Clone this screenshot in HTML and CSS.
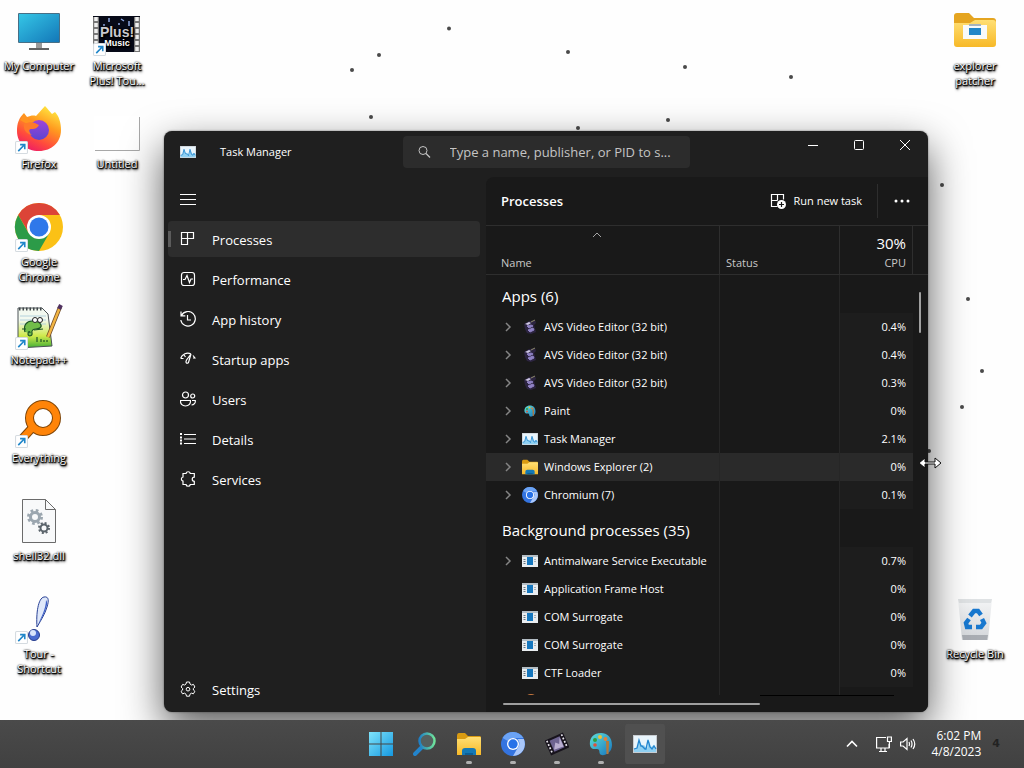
FILE: index.html
```html
<!DOCTYPE html>
<html lang="en">
<head>
<meta charset="utf-8">
<title>Desktop</title>
<link rel="stylesheet" href="styles.css">
</head>
<body>
<svg class="defs" aria-hidden="true">
  <defs>
    <linearGradient id="gScreen" x1="0" y1="0" x2="1" y2="1"><stop offset="0" stop-color="#35c6e6"/><stop offset="1" stop-color="#1377b8"/></linearGradient>
    <linearGradient id="gFox" x1=".8" y1="0" x2=".3" y2="1"><stop offset="0" stop-color="#fff044"/><stop offset=".4" stop-color="#ff9a1f"/><stop offset=".75" stop-color="#ff4a3d"/><stop offset="1" stop-color="#ee1c66"/></linearGradient>
    <linearGradient id="gFoxIn" x1="0" y1="0" x2="0" y2="1"><stop offset="0" stop-color="#a044d8"/><stop offset="1" stop-color="#5b45d0"/></linearGradient>
    <linearGradient id="gWin" x1="0" y1="0" x2="1" y2="1"><stop offset="0" stop-color="#7fe4fb"/><stop offset="1" stop-color="#1598e0"/></linearGradient>
    <linearGradient id="gFolder" x1="0" y1="0" x2="0" y2="1"><stop offset="0" stop-color="#ffdf74"/><stop offset="1" stop-color="#f7b928"/></linearGradient>
    <linearGradient id="gPage" x1="0" y1="0" x2="0" y2="1"><stop offset=".3" stop-color="#f3f9f0"/><stop offset=".7" stop-color="#cfe94a"/><stop offset="1" stop-color="#3fae35"/></linearGradient>
    <linearGradient id="gRing" x1="0" y1="0" x2="1" y2="0"><stop offset="0" stop-color="#1f7fc4"/><stop offset="1" stop-color="#6fe39b"/></linearGradient>
    <linearGradient id="gBin" x1="0" y1="0" x2="0" y2="1"><stop offset="0" stop-color="#f4f5f6"/><stop offset="1" stop-color="#d3d6da"/></linearGradient>
    <linearGradient id="gPaint" x1="0" y1="0" x2="1" y2="1"><stop offset="0" stop-color="#5fe0d8"/><stop offset="1" stop-color="#1676c0"/></linearGradient>
    <symbol id="arrow" viewBox="0 0 12 12"><rect x=".5" y=".5" width="11" height="11" rx="1" fill="#fff" stroke="#d5dbe0"/><path d="M3 9.300 8.500 3.700M4.700 3.300H9V7.600" fill="none" stroke="#1f86c9" stroke-width="1.500"/></symbol>
    <symbol id="taskmgr" viewBox="0 0 24 18"><rect width="24" height="18" fill="#c8cdd2"/><rect x="1" y="1" width="22" height="16" fill="#e9f5fc"/><path d="M1 14l3-1 2-7 2 5 3-1 3 4 2-8 2 6 3-2 2 3v4H1z" fill="#8fd0f2"/><path d="M1 14l3-1 2-8 2 6 1 0 3 3 1 0 2-9 2 7 2 2 2-3 2 3" fill="none" stroke="#2386cf" stroke-width="1.300"/></symbol>
    <symbol id="folder" viewBox="0 0 24 22"><path d="M0 3q0-3 2-3h6l3 3h12q1 0 1 2v4H0z" fill="#d99b12"/><path d="M0 6h8l3-2h12q1 0 1 1v17H0z" fill="url(#gFolder)"/><path d="M5 22v-4q0-3 3-3h8q3 0 3 3v4z" fill="#1579b5"/><path d="M8 22v-2h8v2z" fill="#0c5f96"/></symbol>
    <symbol id="chromium" viewBox="0 0 24 24"><circle cx="12" cy="12" r="12" fill="#3474e0"/><path d="M1.600 6A12 12 0 0 1 22.400 6H12a6 6 0 0 0-5.200 3z" fill="#6ba3f5"/><path d="M22.800 7A12 12 0 0 1 12 24l5.200-9a6 6 0 0 0-.8-8z" fill="#a9c7fa"/><circle cx="12" cy="12" r="6" fill="#fff"/><circle cx="12" cy="12" r="4.700" fill="#2872e8"/></symbol>
    <symbol id="film" viewBox="0 0 24 24"><g transform="rotate(-24 12 12)"><rect x="2" y="4" width="20" height="16" fill="#17131c"/><rect x="6.500" y="6" width="11" height="12" fill="#6d6390"/><path d="M7 16l4-6 3 3 3-6v10z" fill="#b9aed0"/><path d="M4 5v14M20 5v14" stroke="#e9e6ee" stroke-width="1.700" stroke-dasharray="1.800 1.800"/></g></symbol>
    <symbol id="palette" viewBox="0 0 24 24"><path d="M12 1C4 1 0 7 1 13c1 5 5 4 7 4 3 0 2 3 3 5 2 3 12 0 12-9C23 5 18 1 12 1z" fill="url(#gPaint)"/><circle cx="6" cy="8" r="2" fill="#2f9e3b"/><circle cx="11" cy="5" r="2" fill="#f1c232"/><circle cx="6" cy="13" r="1.800" fill="#e0503a"/><circle cx="16.500" cy="7" r="2" fill="#e3813a"/><path d="M17 9h3l-.5 13h-2z" fill="#b5793b"/></symbol>
    <symbol id="exe" viewBox="0 0 16 12"><rect width="16" height="12" fill="#e9edf0"/><rect width="16" height="2" fill="#b3bdc4"/><rect x="5" y="2" width="6" height="8" fill="#1677be"/><path d="M1.500 4.500h2M1.500 6.500h2M1.500 8.500h2M12.500 4.500h1M12.500 6.500h1" stroke="#6b7780"/></symbol>
    <symbol id="avs" viewBox="0 0 16 16"><path d="M2 5l5-3 6-1 1 3-2 2 2 7-5 2-4-1-2-4z" fill="#2c2440"/><path d="M9 3l4-2" stroke="#8d8a68"/><path d="M3 5l4-2 2 1-3 2z" fill="#cfc8e6"/><path d="M5 7l4-1 2 1-4 2zM6 11l5-2 1 2-4 2z" fill="#8f82c4" stroke="#8f82c4"/></symbol>
    <symbol id="chev" viewBox="0 0 8 10"><path d="M2 1l4 4-4 4" fill="none" stroke="#858585" stroke-width="1.500"/></symbol>
  </defs>
</svg>

<div class="screen">
  <main class="desktop">
    <svg class="specks" aria-hidden="true">
      <g fill="#4a4a4a"><circle cx="449" cy="28.500" r="2"/><circle cx="379" cy="55" r="2"/><circle cx="352" cy="70" r="2"/><circle cx="568" cy="52" r="2"/><circle cx="685" cy="67" r="2"/><circle cx="791" cy="77" r="2"/><circle cx="371" cy="117" r="2"/><circle cx="668" cy="120" r="2"/><circle cx="578" cy="128" r="2"/><circle cx="942" cy="185" r="2"/><circle cx="968" cy="299" r="2"/><circle cx="982" cy="371" r="2"/><circle cx="962" cy="407" r="2"/><circle cx="929" cy="451" r="2"/></g>
    </svg>

    <div class="icons">
      <a class="shortcut" href="#"><svg class="art" viewBox="0 0 48 48"><rect x="3" y="5" width="42" height="30" rx="1" fill="#476f86"/><rect x="4" y="6" width="40" height="28" fill="url(#gScreen)"/><path d="M21 35h6v6h-6z" fill="#9b9b9b"/><path d="M14 40h20v2H14z" fill="#626262"/></svg><span>My Computer</span></a>
      <a class="shortcut" href="#"><svg class="art" viewBox="0 0 48 48"><path d="M2 25C2 17 4 12 9 7l3 4c3-1 6-2 9-1l9-10c3 3 5 6 7 8l3-2c4 4 6 11 6 18 0 12-9 21-22 21S2 37 2 25z" fill="url(#gFox)"/><path d="M5 14l4-6 5 6 8 1-6 5z" fill="#ff9420"/><circle cx="24" cy="24" r="10" fill="url(#gFoxIn)"/><path d="M9 18c6-3 10-2 15 1-2 4-5 4-8 4s-2 4 1 6c-6-1-9-6-8-11z" fill="#ff7a2a"/><use href="#arrow" y="35" width="13" height="13"/></svg><span>Firefox</span></a>
      <a class="shortcut" href="#"><svg class="art" viewBox="0 0 48 48"><circle cx="24" cy="23" r="24" fill="#fbc116"/><path d="M3.200 11A24 24 0 0 1 44.800 11H24L14 29z" fill="#dc4437"/><path d="M3.200 11A24 24 0 0 0 24 47L34.400 29 24 23 13.600 29z" fill="#2c9b48"/><circle cx="24" cy="23" r="12" fill="#fff"/><circle cx="24" cy="23" r="9.500" fill="#2f78ea"/><use href="#arrow" y="35" width="13" height="13"/></svg><span>Google Chrome</span></a>
      <a class="shortcut" href="#"><svg class="art" viewBox="0 0 48 48"><path d="M3 6h24l6 6 4 32-34 2z" fill="url(#gPage)" stroke="#4b5257"/><path d="M4 7h23" stroke="#40464a" stroke-width="3" stroke-dasharray="1.500 2"/><path d="M5 14h26M5 18h26M5 22h26" stroke="#b5d2dc"/><path d="M10 30c-2-7 2-11 7-11 4 0 8 1 9 4s-3 4-5 4-5 1-4 4-4 4-4 1 2-3 2-1" fill="#71bd49" stroke="#1c5426" stroke-width="1.200"/><path d="M7 27h4M19 28l9-1M22 40v-5M26 40v-3M29 40v-2M32 40v-2" stroke="#1c5426" stroke-width="1.200"/><circle cx="20" cy="18" r="2.500" fill="#fff" stroke="#222"/><circle cx="25" cy="18" r="2.500" fill="#fff" stroke="#222"/><path d="M45 5L33 35" stroke="#6b4725" stroke-width="4"/><path d="M45 5L33 35" stroke="#f2b543" stroke-width="2.500"/><path d="M46 3l-2 4" stroke="#513261" stroke-width="4"/><use href="#arrow" y="35" width="13" height="13"/></svg><span>Notepad++</span></a>
      <a class="shortcut" href="#"><svg class="art" viewBox="0 0 48 48"><path d="M7 39l10-11" stroke="#7f4507" stroke-width="9"/><circle cx="28" cy="18" r="13.500" fill="none" stroke="#7f4507" stroke-width="9"/><circle cx="28" cy="18" r="13.500" fill="none" stroke="#ff8408" stroke-width="7"/><path d="M7 39l11-12" stroke="#ff8408" stroke-width="7"/><use href="#arrow" y="35" width="13" height="13"/></svg><span>Everything</span></a>
      <a class="shortcut" href="#"><svg class="art" viewBox="0 0 48 48"><path d="M7.500 1.500h23l10 10v33h-33z" fill="#f8f9fa" stroke="#6b6b6b"/><path d="M30.500 1.500v10h10" fill="none" stroke="#6b6b6b"/><circle cx="20" cy="19" r="4.500" fill="none" stroke="#9ba6af" stroke-width="3"/><circle cx="20" cy="19" r="6.500" fill="none" stroke="#9ba6af" stroke-width="3" stroke-dasharray="2.600 2.500"/><circle cx="29" cy="30" r="3.500" fill="none" stroke="#5b646b" stroke-width="2"/><circle cx="29" cy="30" r="5" fill="none" stroke="#5b646b" stroke-width="2" stroke-dasharray="2 1.930"/></svg><span>shell32.dll</span></a>
      <a class="shortcut" href="#"><svg class="art" viewBox="0 0 48 48"><path d="M22 31C21 18 23 2 29 1c5-1 5 4 3 10-2 7-6 13-10 20z" fill="#dfe8fa" stroke="#2a4296"/><path d="M23 29c3-8 8-16 8-25 2 3 1 5 0 8-2 7-5 11-8 17z" fill="#3c5fc8"/><circle cx="19" cy="39" r="5.500" fill="#4a6bcf" stroke="#263c8c"/><circle cx="18" cy="37" r="3" fill="#d9e4fb"/><use href="#arrow" y="35" width="13" height="13"/></svg><span>Tour - Shortcut</span></a>
      <a class="shortcut" href="#"><svg class="art" viewBox="0 0 48 48"><rect y="8" width="47" height="36" fill="#070a18"/><path d="M3 9v35M44 9v35" stroke="#777" stroke-width="6"/><path d="M3 9v35M44 9v35" stroke="#f0f0f0" stroke-width="3.500" stroke-dasharray="4 2"/><path d="M16 10v4M28 11l3 2M36 13v5M25 16h2M10 17h2" stroke="#8ca6e0" stroke-width="1.500"/><text class="plus" x="24" y="29" text-anchor="middle">Plus!</text><text class="music" x="24" y="38" text-anchor="middle">Music</text><use href="#arrow" y="35" width="13" height="13"/></svg><span>Microsoft Plus! Tou...</span></a>
      <a class="shortcut" href="#"><svg class="art" viewBox="0 0 48 48"><path d="M1 10h45v34H1z" fill="#fff"/><path d="M2 44.500h44.500V11" fill="none" stroke="#a8a8a8"/></svg><span>Untitled</span></a>
    </div>

    <div class="icons icons-right">
      <a class="shortcut" href="#"><svg class="art" viewBox="0 0 48 48"><path d="M3 8q0-3 3-3h12l5 5h19q3 0 3 3v8H3z" fill="#e5a520"/><path d="M3 15h16l5-3h18q3 0 3 3v21q0 3-3 3H6q-3 0-3-3z" fill="url(#gFolder)"/><rect x="12" y="17" width="24" height="14" fill="#f8fafb"/><rect x="18" y="20" width="12" height="7" fill="#2186c8"/><path d="M18 17h12" stroke="#a7b4bd" stroke-width="2"/></svg><span>explorer patcher</span></a>
      <a class="shortcut bin" href="#"><svg class="art" viewBox="0 0 48 48"><path d="M7 3h34l-4 41H11z" fill="url(#gBin)"/><path d="M7 3h34l-1 4H8z" fill="#dfe2e4"/><path d="M11 39h26l-1 5H12z" fill="#a9adb3"/><g fill="none" stroke="#1878cf" stroke-width="4.500"><path d="M19 20l4-5h4l3 4M31 23l2 4-3 4h-5M21 31h-5l-1-4 3-4"/></g></svg><span>Recycle Bin</span></a>
    </div>

    <section class="window" aria-label="Task Manager">
      <header class="titlebar">
        <div class="brand"><svg class="i16" viewBox="0 0 24 18"><use href="#taskmgr"/></svg><span>Task Manager</span></div>
        <label class="search"><svg class="i14" viewBox="0 0 14 14"><circle cx="6" cy="5.500" r="4" fill="none" stroke="currentColor"/><path d="M9 8.500l4 4" stroke="currentColor" stroke-width="1.200"/></svg><input type="text" aria-label="Search" placeholder="Type a name, publisher, or PID to s..."></label>
        <div class="controls">
          <button aria-label="Minimize"><svg viewBox="0 0 12 12"><path d="M1 6.500h10"/></svg></button>
          <button aria-label="Maximize"><svg viewBox="0 0 12 12"><rect x="1.500" y="1.500" width="9" height="9" rx="1"/></svg></button>
          <button aria-label="Close"><svg viewBox="0 0 12 12"><path d="M1 1l10 10M11 1L1 11"/></svg></button>
        </div>
      </header>
      <div class="body">
        <nav class="sidebar">
          <button class="menu" aria-label="Menu"><svg class="i16" viewBox="0 0 16 16"><path d="M0 3.500h16M0 8.500h16M0 13.500h16" stroke="currentColor"/></svg></button>
          <a class="item active" href="#"><svg class="i16" viewBox="0 0 16 16"><path d="M1.500 1.500h12v6h-12zM1.500 1.500v12h6v-12" fill="none" stroke="currentColor" stroke-width="1.200"/></svg>Processes</a>
          <a class="item" href="#"><svg class="i16" viewBox="0 0 16 16"><rect x="1.500" y="1.500" width="13" height="13" rx="2.500" fill="none" stroke="currentColor" stroke-width="1.200"/><path d="M3 8.500h2l2-4 2.500 7L11 8h2" fill="none" stroke="currentColor" stroke-width="1.200"/></svg>Performance</a>
          <a class="item" href="#"><svg class="i16" viewBox="0 0 16 16"><path d="M1.500 4.500A7.300 7.300 0 1 1 .8 9M1 .5v4.300h4.300M7.500 4v5h3.500" fill="none" stroke="currentColor" stroke-width="1.200"/></svg>App history</a>
          <a class="item" href="#"><svg class="i16" viewBox="0 0 16 16"><path d="M.6 7.500C2 3 7 1 11 3M13 4.500l2.400 3M1 7.500h2.500M4 4l1.500 2M15 7h-2" fill="none" stroke="currentColor" stroke-width="1.200"/><path d="M11 3L6.500 9c-1.500 3 .5 4 2 2.500z" fill="none" stroke="currentColor" stroke-width="1.200"/></svg>Startup apps</a>
          <a class="item" href="#"><svg class="i16" viewBox="0 0 16 16"><g fill="none" stroke="currentColor" stroke-width="1.200"><circle cx="5.500" cy="4" r="3"/><circle cx="12.700" cy="5" r="2"/><path d="M.6 9.500h9.800c.5 3-1.500 5.500-4.900 5.500S.1 12.500.6 9.500zM12 9.500h3.300c.3 2.500-1.300 4.500-3.800 4.500"/></g></svg>Users</a>
          <a class="item" href="#"><svg class="i16" viewBox="0 0 16 16"><path d="M4 3.500h12M4 8h12M4 12.500h12" stroke="currentColor" stroke-width="1.200"/><path d="M1 2v2M1 5.500v2M1 8.500v2M1 11.500v2" stroke="currentColor" stroke-width="2"/></svg>Details</a>
          <a class="item" href="#"><svg class="i16" viewBox="0 0 16 16"><path d="M3 2.500h3a2.200 2.200 0 0 1 4.300 0h4v3.700a2 2 0 0 0 0 4.100v3.200h-4a2.200 2.200 0 0 1-4.300 0H3v-3.400a2.100 2.100 0 0 1 0-4.100z" fill="none" stroke="currentColor" stroke-width="1.200"/></svg>Services</a>
          <a class="item settings" href="#"><svg class="i16" viewBox="0 0 16 16"><path d="M6.500 1h3l.5 2 1.500 1 2-.6 1.400 2.600L13.400 7.500v1.500l1.500 1.300-1.500 2.500-2-.6-1.400 1-.5 2h-3l-.5-2-1.500-1-2 .6L1.100 10.300 2.600 9V7.500L1.100 6l1.500-2.600 2 .6L6 3z" fill="none" stroke="currentColor"/><circle cx="8" cy="8.200" r="1.800" fill="none" stroke="currentColor"/></svg>Settings</a>
        </nav>
        <section class="pane">
          <div class="toolbar">
            <h1>Processes</h1>
            <button class="run"><svg class="i16" viewBox="0 0 16 16"><path d="M7.500 13.500h-6v-12h12v5M1.500 7.500h6M7.500 1.500v6" fill="none" stroke="currentColor" stroke-width="1.200"/><circle cx="11.500" cy="11.500" r="4.500" fill="#fff"/><path d="M9 11.500h5M11.500 9v5" stroke="#191919" stroke-width="1.200"/></svg>Run new task</button>
            <button class="more" aria-label="More"><svg class="i16" viewBox="0 0 16 16"><g fill="currentColor"><circle cx="2" cy="8" r="1.500"/><circle cx="8" cy="8" r="1.500"/><circle cx="14" cy="8" r="1.500"/></g></svg></button>
          </div>
          <div class="scroller">
            <table>
              <colgroup><col class="c-name"><col class="c-status"><col class="c-cpu"><col class="c-rest"></colgroup>
              <thead><tr><th><svg class="sort" viewBox="0 0 10 6"><path d="M1 5l4-4 4 4" fill="none" stroke="#a5a5a5"/></svg><span>Name</span></th><th><span>Status</span></th><th class="num"><b>30%</b><span>CPU</span></th><th></th></tr></thead>
              <tbody>
                <tr class="group"><td>Apps (6)</td><td></td><td></td><td></td></tr>
                <tr><td><div class="proc"><svg class="chev"><use href="#chev"/></svg><svg class="i16"><use href="#avs"/></svg>AVS Video Editor (32 bit)</div></td><td></td><td class="num">0.4%</td><td></td></tr>
                <tr><td><div class="proc"><svg class="chev"><use href="#chev"/></svg><svg class="i16"><use href="#avs"/></svg>AVS Video Editor (32 bit)</div></td><td></td><td class="num">0.4%</td><td></td></tr>
                <tr><td><div class="proc"><svg class="chev"><use href="#chev"/></svg><svg class="i16"><use href="#avs"/></svg>AVS Video Editor (32 bit)</div></td><td></td><td class="num">0.3%</td><td></td></tr>
                <tr><td><div class="proc"><svg class="chev"><use href="#chev"/></svg><svg class="i16" viewBox="-4 -4 32 32"><use href="#palette" width="24" height="24"/></svg>Paint</div></td><td></td><td class="num">0%</td><td></td></tr>
                <tr><td><div class="proc"><svg class="chev"><use href="#chev"/></svg><svg class="i16"><use href="#taskmgr"/></svg>Task Manager</div></td><td></td><td class="num">2.1%</td><td></td></tr>
                <tr class="hover"><td><div class="proc"><svg class="chev"><use href="#chev"/></svg><svg class="i16"><use href="#folder"/></svg>Windows Explorer (2)</div></td><td></td><td class="num">0%</td><td></td></tr>
                <tr><td><div class="proc"><svg class="chev"><use href="#chev"/></svg><svg class="i16"><use href="#chromium"/></svg>Chromium (7)</div></td><td></td><td class="num">0.1%</td><td></td></tr>
                <tr class="group"><td>Background processes (35)</td><td></td><td></td><td></td></tr>
                <tr><td><div class="proc"><svg class="chev"><use href="#chev"/></svg><svg class="i16"><use href="#exe"/></svg>Antimalware Service Executable</div></td><td></td><td class="num">0.7%</td><td></td></tr>
                <tr><td><div class="proc"><i class="chev"></i><svg class="i16"><use href="#exe"/></svg>Application Frame Host</div></td><td></td><td class="num">0%</td><td></td></tr>
                <tr><td><div class="proc"><i class="chev"></i><svg class="i16"><use href="#exe"/></svg>COM Surrogate</div></td><td></td><td class="num">0%</td><td></td></tr>
                <tr><td><div class="proc"><i class="chev"></i><svg class="i16"><use href="#exe"/></svg>COM Surrogate</div></td><td></td><td class="num">0%</td><td></td></tr>
                <tr><td><div class="proc"><i class="chev"></i><svg class="i16"><use href="#exe"/></svg>CTF Loader</div></td><td></td><td class="num">0%</td><td></td></tr>
                <tr><td><div class="proc"><i class="chev"></i><svg class="i16" viewBox="0 0 16 16"><circle cx="9" cy="8" r="7" fill="#c9793f"/></svg></div></td><td></td><td></td><td></td></tr>
              </tbody>
            </table>
            <i class="vthumb"></i>
          </div>
          <div class="hscroll"><i class="hthumb"></i><i class="htrack"></i></div>
        </section>
      </div>
    </section>

    <svg class="cursor" viewBox="0 0 24 12" aria-hidden="true"><path d="M1 6l6-5v4h10V1l6 5-6 5V7H7v4z" fill="#fff" stroke="#111"/></svg>
  </main>

  <footer class="taskbar">
    <div></div>
    <div class="apps">
      <button aria-label="Start"><svg class="i24" viewBox="0 0 24 24"><path d="M0 0h11.500v11.500H0zM12.500 0H24v11.500H12.500zM0 12.500h11.500V24H0zM12.500 12.500H24V24H12.500z" fill="url(#gWin)"/></svg></button>
      <button aria-label="Search"><svg class="i24" viewBox="0 0 24 24"><path d="M9 15l-7 7" stroke="#2384cc" stroke-width="4" stroke-linecap="round"/><circle cx="14" cy="9" r="7.500" fill="#55605f" stroke="url(#gRing)" stroke-width="2.500"/></svg></button>
      <button class="open" aria-label="File Explorer"><svg class="i24"><use href="#folder"/></svg></button>
      <button class="open" aria-label="Chromium"><svg class="i24"><use href="#chromium"/></svg></button>
      <button class="open" aria-label="AVS Video Editor"><svg class="i24"><use href="#film"/></svg></button>
      <button class="open" aria-label="Paint"><svg class="i24"><use href="#palette"/></svg></button>
      <button class="current" aria-label="Task Manager"><svg class="i24"><use href="#taskmgr"/></svg></button>
    </div>
    <div class="tray">
      <button aria-label="Show hidden icons"><svg class="i16" viewBox="0 0 16 16"><path d="M3 10.500l5-5 5 5" fill="none" stroke="currentColor" stroke-width="1.600"/></svg></button>
      <button aria-label="Network"><svg class="i16" viewBox="0 0 16 16"><path d="M10 1.500H.6v10.500H13V8M3 15.500h8M5 12v3M9 12v3M11.500 1h3.900v4.500h-3.900zM13.400 5.500V12" fill="none" stroke="currentColor" stroke-width="1.200"/></svg></button>
      <button aria-label="Volume"><svg class="i16" viewBox="0 0 16 16"><path d="M.6 6h2.500L7 2.500v11L3.100 10H.6zM9 6q1 2 0 4M11 4.500q2 3.500 0 7M13 3q3.500 5 0 10" fill="none" stroke="currentColor" stroke-width="1.200"/></svg></button>
      <time class="clock"><span>6:02 PM</span><span>4/8/2023</span></time>
      <span class="four">4</span>
    </div>
  </footer>
</div>
</body>
</html>
```

FILE: styles.css
```css
* { box-sizing: border-box; }

body {
  margin: 0;
  font: 11px/16px "Open Sans", "Noto Sans", sans-serif;
  color: #fff;
  background: #fefefe;
}

button {
  display: flex;
  align-items: center;
  justify-content: center;
  padding: 0;
  border: 0;
  background: none;
  color: inherit;
  font: inherit;
}

a { color: inherit; text-decoration: none; }

.defs { position: absolute; width: 0; height: 0; }
.i14 { width: 14px; height: 14px; flex: none; }
.i16 { width: 16px; height: 16px; flex: none; }
.i24 { width: 24px; height: 24px; flex: none; }

.screen {
  display: flex;
  flex-direction: column;
  height: 100vh;
  min-height: 700px;
  overflow: hidden;
}

/* Desktop */
.desktop {
  position: relative;
  flex: 1;
  display: flex;
  justify-content: space-between;
  min-height: 0;
}

.specks { position: absolute; inset: 0; width: 100%; height: 100%; }

.icons {
  position: relative;
  display: grid;
  grid-template-rows: repeat(7, 98px);
  grid-auto-flow: column;
  grid-auto-columns: 78px;
  align-content: start;
}

.icons-right { margin-right: 10px; }
.bin { grid-row: 7; }

.shortcut {
  display: flex;
  flex-direction: column;
  align-items: center;
  gap: 2px;
  padding-top: 8px;
  line-height: 15px;
  text-align: center;
  text-shadow: 0 0 2px #000, 1px 1px 2px #000, 1px 1px 1px #000, 0 1px 1px #000, 1px 2px 3px #000;
}

.shortcut span { max-width: 72px; }
.art { width: 48px; height: 48px; flex: none; overflow: visible; }
.plus { font: bold 14px "Liberation Sans", sans-serif; fill: #c9c9cf; }
.music { font: bold 9px "Liberation Sans", sans-serif; fill: #fff; }

/* Window */
.window {
  position: absolute;
  top: 131px;
  right: 96px;
  bottom: 8px;
  left: 164px;
  display: flex;
  flex-direction: column;
  overflow: hidden;
  border-radius: 8px;
  background: #1f1f1f;
  box-shadow: 0 0 2px rgba(0, 0, 0, .5), 0 16px 40px rgba(0, 0, 0, .65);
}

.titlebar {
  display: grid;
  grid-template-columns: 1fr 287px 1fr;
  height: 46px;
}

.brand { display: flex; align-items: center; gap: 24px; padding: 0 0 4px 16px; }

.search {
  display: flex;
  align-items: center;
  gap: 19px;
  height: 32px;
  margin-top: 5px;
  padding: 0 12px 0 14px;
  border-radius: 4px;
  background: #2c2c2c;
  color: #c4c4c4;
}

.search input {
  flex: 1;
  min-width: 0;
  padding: 0;
  border: 0;
  outline: 0;
  background: none;
  color: #fff;
  font: 13px/20px "Open Sans", "Noto Sans", sans-serif;
}

.search input::placeholder { color: #c4c4c4; opacity: 1; }

.controls { display: flex; justify-content: flex-end; }
.controls button { width: 46px; height: 28px; }
.controls svg { width: 12px; height: 12px; fill: none; stroke: #fff; }

.body { flex: 1; display: flex; min-height: 0; }

.sidebar {
  display: flex;
  flex-direction: column;
  gap: 4px;
  width: 322px;
  padding: 4px 6px 5px 4px;
}

.menu { width: 40px; height: 36px; }

.item {
  display: flex;
  align-items: center;
  gap: 16px;
  height: 36px;
  padding: 1px 0 0 12px;
  border-radius: 4px;
  font-size: 13px;
}

.item .i16 { margin-bottom: 2px; }

.active { background: linear-gradient(#5c5c5c, #5c5c5c) 0 50% / 3px 16px no-repeat #2d2d2d; }
.settings { margin-top: auto; }

.pane {
  flex: 1;
  display: flex;
  flex-direction: column;
  min-width: 0;
  border-top-left-radius: 8px;
  background: #191919;
}

.toolbar {
  display: flex;
  align-items: center;
  height: 48px;
  padding-left: 15px;
}

h1 { flex: 1; margin: 0; font-size: 13px; font-weight: 600; }
.run { gap: 8px; padding-right: 15px; }
.more { width: 51px; height: 34px; padding-right: 2px; border-left: 1px solid #2e2e2e; }

.scroller { position: relative; flex: 1; min-height: 0; overflow: hidden; }

table { width: 100%; border-collapse: separate; border-spacing: 0; table-layout: fixed; }
.c-status { width: 120px; }
.c-cpu { width: 73px; }
.c-rest { width: 15px; }

th {
  position: relative;
  height: 50px;
  padding: 0 6px 3px;
  border: solid #2e2e2e;
  border-width: 1px 1px 1px 0;
  color: #c8c8c8;
  font-weight: 400;
  text-align: left;
  vertical-align: bottom;
}

th:first-child { padding-left: 15px; }
th:last-child { border-right: 0; }
th b { display: block; color: #fff; font-size: 15px; font-weight: 400; line-height: 24px; }
th.num, td.num { padding-right: 7px; text-align: right; }
th.num { padding-right: 6px; }

.sort { position: absolute; top: 6px; left: 48%; width: 10px; height: 6px; margin-left: -6px; }

td { height: 28px; padding: 0; border-right: 1px solid #262626; }
td:nth-child(3) { border-right: 0; }
td:last-child { border-right: 0; }
td.num { background: #1d1d1d; }
.group td { height: 38px; padding: 4px 0 0 16px; font-size: 15px; white-space: nowrap; }
.hover td, .hover td.num { background: #2a2a2a; }
.hover td:last-child { background: none; }

.proc { display: flex; align-items: center; padding-left: 18px; white-space: nowrap; }
.proc .i16 { margin-right: 6px; }
.chev { width: 8px; height: 10px; margin-right: 10px; flex: none; }

.vthumb {
  position: absolute;
  top: 67px;
  right: 7px;
  width: 2px;
  height: 41px;
  border-radius: 1px;
  background: #9f9f9f;
}

.hscroll { display: flex; height: 17px; padding: 0 34px 0 17px; }
.hthumb { width: 257px; height: 2px; margin-top: 8px; border-radius: 1px; background: #9f9f9f; }
.htrack { flex: 1; height: 1px; background: #000; }

.cursor { position: absolute; top: 457px; right: 82px; width: 24px; height: 12px; }

/* Taskbar */
.taskbar {
  position: relative;
  display: grid;
  grid-template-columns: 1fr auto 1fr;
  height: 48px;
  background: linear-gradient(#4a4a4a, #414141);
}

.apps { display: flex; align-items: center; padding-left: 2px; }
.apps button { position: relative; width: 44px; height: 40px; border-radius: 4px; }
.apps .current { padding: 0 2px; background: #505050 content-box; }

.open::after {
  content: "";
  position: absolute;
  bottom: 0;
  width: 6px;
  height: 3px;
  border-radius: 2px;
  background: #b0b0b0;
}

.tray { display: flex; align-items: center; justify-content: flex-end; gap: 8px; padding-right: 24px; }
.tray button:first-child { margin-right: 8px; }
.clock { display: grid; margin-left: 7px; font-size: 12px; text-align: right; }
.four { margin-left: 3px; color: #222; font: bold 11px/16px "DejaVu Sans", sans-serif; }
```
